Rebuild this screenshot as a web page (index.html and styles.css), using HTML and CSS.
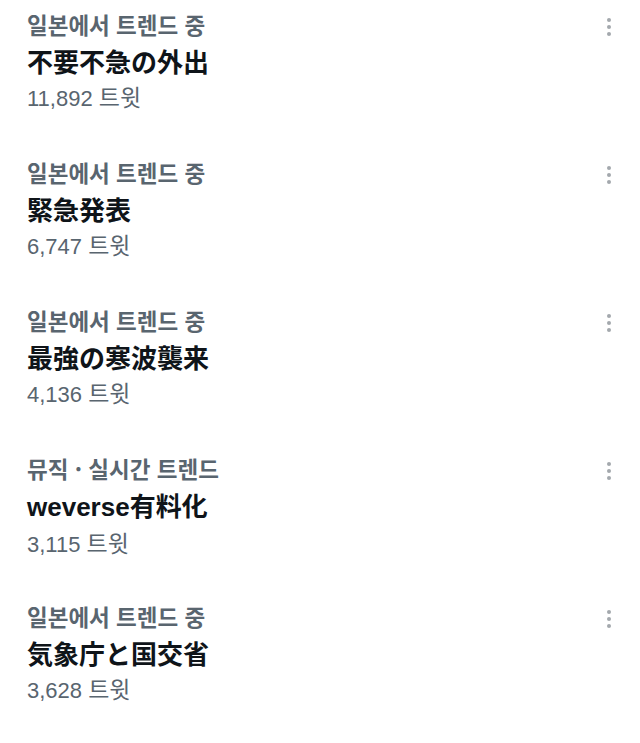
FILE: index.html
```html
<!DOCTYPE html>
<html lang="ko">
<head>
    <meta charset="UTF-8">
    <meta name="viewport" content="width=device-width, initial-scale=1.0">
    <title>트렌드</title>
    <link rel="stylesheet" href="styles.css">
</head>
<body>
    <div class="trend-list">
        <div class="trend">
            <div class="trend-text">
                <div class="trend-context">일본에서 트렌드 중</div>
                <div class="trend-name">不要不急の外出</div>
                <div class="trend-count">11,892 <span class="unit">트윗</span></div>
            </div>
            <div class="more"><span></span><span></span><span></span></div>
        </div>
        <div class="trend">
            <div class="trend-text">
                <div class="trend-context">일본에서 트렌드 중</div>
                <div class="trend-name">緊急発表</div>
                <div class="trend-count">6,747 <span class="unit">트윗</span></div>
            </div>
            <div class="more"><span></span><span></span><span></span></div>
        </div>
        <div class="trend">
            <div class="trend-text">
                <div class="trend-context">일본에서 트렌드 중</div>
                <div class="trend-name">最強の寒波襲来</div>
                <div class="trend-count">4,136 <span class="unit">트윗</span></div>
            </div>
            <div class="more"><span></span><span></span><span></span></div>
        </div>
        <div class="trend">
            <div class="trend-text">
                <div class="trend-context">뮤직 · 실시간 트렌드</div>
                <div class="trend-name"><span class="latin">weverse</span>有料化</div>
                <div class="trend-count">3,115 <span class="unit">트윗</span></div>
            </div>
            <div class="more"><span></span><span></span><span></span></div>
        </div>
        <div class="trend">
            <div class="trend-text">
                <div class="trend-context">일본에서 트렌드 중</div>
                <div class="trend-name">気象庁と国交省</div>
                <div class="trend-count">3,628 <span class="unit">트윗</span></div>
            </div>
            <div class="more"><span></span><span></span><span></span></div>
        </div>
    </div>
</body>
</html>
```

FILE: styles.css
```css
body {
    margin: 0;
    background-color: #ffffff;
    font-family: "Liberation Sans", "Noto Sans CJK KR", sans-serif;
}
.trend-list {
    display: flex;
    flex-direction: column;
}
.trend {
    display: flex;
    justify-content: space-between;
    align-items: flex-start;
    height: 148px;
    padding: 8px 27px 0 27px;
    box-sizing: border-box;
}
.trend-context {
    font-family: "Noto Sans CJK KR", sans-serif;
    font-size: 22.5px;
    font-weight: 700;
    line-height: 32px;
    color: #59656f;
}
.trend-name {
    margin-top: 2px;
    font-family: "Noto Sans CJK JP", sans-serif;
    font-size: 26px;
    font-weight: 700;
    line-height: 38px;
    color: #0f1419;
}
.trend-name .latin {
    font-family: "Liberation Sans", sans-serif;
}
.trend-count {
    font-size: 22px;
    line-height: 32px;
    color: #59656f;
}
.trend-count .unit {
    font-family: "Noto Sans CJK KR", sans-serif;
    font-size: 23px;
}
.more {
    display: flex;
    flex-direction: column;
    gap: 3px;
    margin-top: 10px;
    margin-right: 2px;
}
.more span {
    width: 4px;
    height: 4px;
    border-radius: 50%;
    background-color: #a3a8ad;
}
```
